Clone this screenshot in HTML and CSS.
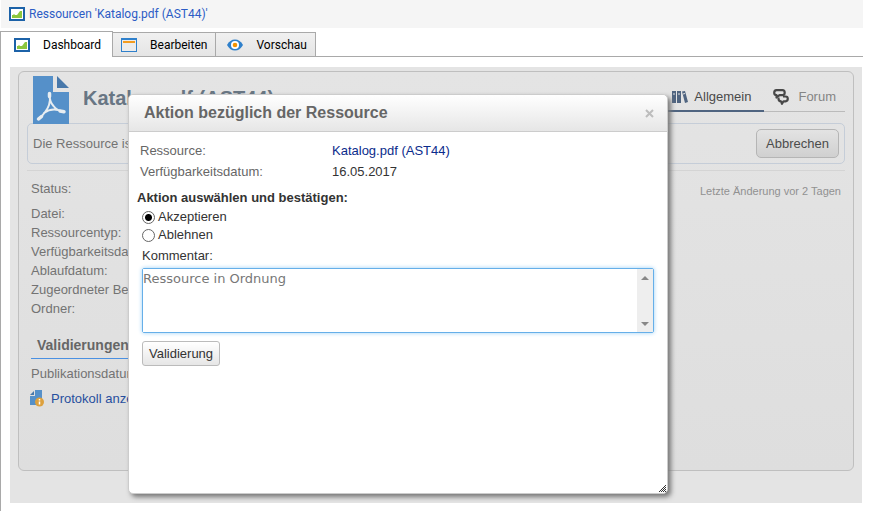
FILE: index.html
```html
<!DOCTYPE html>
<html lang="de">
<head>
<meta charset="utf-8">
<title>Ressourcen 'Katalog.pdf (AST44)'</title>
<link rel="stylesheet" href="styles.css">
</head>
<body>
<svg class="defs" aria-hidden="true">
  <symbol id="chart" viewBox="0 0 16 14">
    <rect x="1" y="1" width="14" height="12" fill="#fff" stroke="#1c62a8" stroke-width="2"/>
    <path d="M3 11V8h1l1-1 1 1h2l3-4h2v7z" fill="#8cc63e"/>
  </symbol>
</svg>
<div class="page">
  <nav class="crumbs"><svg class="ic-chart"><use href="#chart"/></svg><a href="#">Ressourcen 'Katalog.pdf (AST44)'</a></nav>
  <div class="tabs" role="tablist">
    <button class="tab active" role="tab"><svg class="ic-chart"><use href="#chart"/></svg>Dashboard</button>
    <button class="tab" role="tab"><svg class="ic-chart" viewBox="0 0 16 14"><rect x=".5" y=".5" width="15" height="13" fill="#ececec" stroke="#2f80cb"/><path d="M0 1h16" stroke="#2f80cb" stroke-width="2"/><path d="M2 4h12" stroke="#f39c1f" stroke-width="2"/></svg>Bearbeiten</button>
    <button class="tab" role="tab"><svg class="ic-chart" viewBox="0 0 16 14"><path d="M0 7Q3 1.500 8 1.500T16 7Q13 12.500 8 12.500T0 7z" fill="#2f80cb"/><circle cx="8" cy="7" r="4" fill="#fff"/><circle cx="8" cy="7" r="2.300" fill="#f39200"/></svg>Vorschau</button>
  </div>
  <main class="panel">
    <div class="stage">
      <section class="card">
        <header class="head">
          <svg class="ic-pdf" viewBox="0 0 36 48"><path d="M0 0h20v16h16v32H0z" fill="#5590c9"/><path d="M24 0v12h12z" fill="#4878aa"/><g fill="none" stroke="#e8edf1" stroke-linecap="round" stroke-linejoin="round"><path d="M16.500 18c1 5 .5 8-.5 11-2 6-6 10-10 14M16.500 18c0 6 1 9 4 12 3 4 6 5 10 5.500M11 37c4-3 9-4 14-3" stroke-width="2"/><path d="M16.500 17.500v3M5.500 43l3-2.500M27 35l4 .7" stroke-width="3.500"/></g></svg>
          <h1>Katalog.pdf (AST44)</h1>
          <div class="views">
            <a class="view current" href="#"><svg class="ic-books" viewBox="0 0 16 12"><path d="M0 0h4v12H0zM5 0h4v12H5zM10 .5l3-.5 3 11-3 1z" fill="#4f6480"/><path d="M1 3h2M6 3h2M11 3l2-.5" stroke="#e3e3e3"/></svg>Allgemein</a>
            <a class="view" href="#"><svg class="ic-forum" viewBox="0 0 16 16"><g fill="none" stroke="#484848" stroke-width="2.200" stroke-linejoin="round"><path d="M3.500 1.200h6q2.200 0 2.200 2.500T9.500 6.200H6.500L3.500 8.500V6.200Q1.200 6 1.200 3.700T3.500 1.200z"/><path d="M10 7.500h2.500q2.300 0 2.300 2.300T12.500 12.300H10.500L9 14.800 8 12.300q-2.500 0-2.500-2.500V8.500"/></g></svg>Forum</a>
          </div>
        </header>
        <div class="notice"><span>Die Ressource ist zu validieren</span><button class="btn cancel">Abbrechen</button></div>
        <div class="details">
          <dl><dt class="status">Status:</dt><dt>Datei:</dt><dt>Ressourcentyp:</dt><dt>Verfügbarkeitsdatum:</dt><dt>Ablaufdatum:</dt><dt>Zugeordneter Benutzer:</dt><dt>Ordner:</dt></dl>
          <small>Letzte Änderung vor 2 Tagen</small>
        </div>
        <h2>Validierungen</h2>
        <p class="pub">Publikationsdatum:</p>
        <a class="log" href="#"><svg class="ic-log" viewBox="0 0 14 17"><path d="M5 0h7v15H0V6h5z" fill="#5590c9"/><path d="M0 5l4-4v4z" fill="#4878aa"/><circle cx="9.500" cy="12" r="4.500" fill="#dda13e"/><path d="M9.500 9v1.500M9.500 11.500v3" stroke="#fff" stroke-width="1.500"/></svg>Protokoll anzeigen</a>
      </section>
      <div class="dialog" role="dialog" aria-labelledby="dlg">
        <header class="bar"><h3 id="dlg">Aktion bezüglich der Ressource</h3><button class="close" aria-label="Schließen"><svg viewBox="0 0 9 9"><path d="M1 1l7 7M8 1L1 8" stroke="#bdbdbd" stroke-width="2"/></svg></button></header>
        <form class="body">
          <div class="facts"><span>Ressource:</span><a href="#">Katalog.pdf (AST44)</a><span>Verfügbarkeitsdatum:</span><b>16.05.2017</b></div>
          <fieldset>
            <legend>Aktion auswählen und bestätigen:</legend>
            <label class="choice"><input type="radio" name="action" checked>Akzeptieren</label>
            <label class="choice"><input type="radio" name="action">Ablehnen</label>
          </fieldset>
          <label class="caption" for="comment">Kommentar:</label>
          <div class="field"><textarea id="comment">Ressource in Ordnung</textarea>
            <svg class="rail" viewBox="0 0 16 63"><path d="M4 11l4-4 4 4zM4 53l4 4 4-4z" fill="#888"/></svg></div>
          <button class="btn" type="button">Validierung</button>
        </form>
        <svg class="grip" viewBox="0 0 8 8"><path d="M0 7h1v1H0zM2 7h1v1H2zM4 7h1v1H4zM6 7h1v1H6zM1 6h1v1H1zM3 6h1v1H3zM5 6h1v1H5zM2 5h1v1H2zM4 5h1v1H4zM6 5h1v1H6zM3 4h1v1H3zM5 4h1v1H5zM4 3h1v1H4zM6 3h1v1H6zM5 2h1v1H5zM6 1h1v1H6z" fill="#333"/></svg>
      </div>
    </div>
  </main>
</div>
</body>
</html>
```

FILE: styles.css
```css
* { box-sizing: border-box; }
body { margin: 0; background: #fff; color: #333; font: 13px/19px "Liberation Sans", Arial, sans-serif; }
h1, h2, h3, p, dl, fieldset { margin: 0; padding: 0; border: 0; }
button, textarea { font: inherit; }
a { text-decoration: none; }
svg { display: block; flex: none; }
.defs { position: absolute; width: 0; height: 0; }
.page { margin-right: 33px; display: flex; flex-direction: column; min-height: 100vh; }
.crumbs { display: flex; align-items: center; gap: 4px; height: 28px; margin-left: 1px; padding-left: 8px; background: #f5f5f5; font: 12px/16px Roboto, sans-serif; }
.crumbs a { color: #2c5cc5; }
.ic-chart { width: 16px; height: 14px; }
.tabs { display: flex; align-items: flex-end; height: 26px; margin-top: 3px; border-bottom: 1px solid #a9a9a9; }
.tab { display: flex; align-items: center; gap: 13px; height: 24px; margin-left: -1px; padding: 0 8px; border: 1px solid #a9a9a9; border-bottom: 0; background: linear-gradient(#f0f0f0, #e5e5e5); color: #000; font: 12px/16px Roboto, sans-serif; }
.tab + .tab + .tab { padding: 0 8px 0 11px; }
.tab.active { height: 26px; margin: 0 0 -1px; padding: 0 11px 0 13px; background: #fff; }
.panel { flex: 1; border-left: 1px solid #a9a9a9; padding: 10px 1px 8px 9px; }
.stage { position: relative; background: #e4e4e4; padding: 4px 8px 32px; }
.card { min-height: 400px; padding: 4px 8px 0; border: 1px solid #bfbfbf; border-radius: 6px; background: linear-gradient(#e4e4e4, #dedede); color: #737373; }
.head { display: flex; align-items: flex-start; height: 47px; padding-left: 6px; }
.ic-pdf { width: 36px; height: 48px; }
h1 { flex: 1; margin: 10px 0 0 14px; color: #687684; font-size: 20px; line-height: 24px; }
.views { display: flex; margin-top: 3px; }
.view { display: flex; align-items: center; gap: 9px; height: 33px; padding: 4px 9px 0; border-bottom: 1px solid #bbb; color: #858585; line-height: 20px; }
.view.current { gap: 6px; padding: 5px 13px 0; border-bottom: 2px solid #4f6480; color: #4a4a4a; }
.ic-books { width: 16px; height: 12px; }
.ic-forum { width: 16px; height: 16px; }
.notice { display: flex; align-items: center; justify-content: space-between; height: 41px; padding: 0 5px; border: 1px solid #c5cdd8; border-radius: 5px; }
.btn { height: 25px; padding: 0 6px; border: 1px solid #bbb; border-radius: 3px; background: linear-gradient(#fff, #e6e6e6); color: #333; }
.cancel { height: 29px; padding: 0 9px; border-color: #b5b5b5; border-radius: 5px; background: linear-gradient(#e3e3e3, #d0d0d0); color: #4c4c4c; }
.details { display: flex; justify-content: space-between; margin-top: 6px; padding: 8px 4px 0; border-top: 1px solid #d4d4d4; }
.status { margin-bottom: 6px; }
small { margin-top: 3px; color: #919191; font-size: 11px; }
h2 { width: 50%; margin: 17px 4px 5px; padding: 0 6px 3px; border-bottom: 1px solid #4a90e2; color: #666; font-size: 14px; line-height: 20px; }
.pub { padding-left: 4px; }
.log { display: flex; align-items: center; gap: 7px; margin: 6px 3px; color: #284f9e; }
.ic-log { width: 14px; height: 17px; }
.dialog { position: absolute; left: 118px; top: 27px; width: 540px; max-width: 100%; height: 400px; border: 1px solid #ccc; border-radius: 5px; background: #fff; box-shadow: 3px 3px 5px #777; }
.bar { display: flex; align-items: center; justify-content: space-between; height: 37px; padding: 0 13px 0 15px; border-bottom: 1px solid #ccc; border-radius: 5px 5px 0 0; background: linear-gradient(#fff, #e6e6e6); }
h3 { color: #666; font-size: 16px; line-height: 20px; }
.close { padding: 0; border: 0; background: none; }
.close svg { width: 9px; height: 9px; }
.body { padding: 8px 13px; }
.facts { display: grid; grid-template-columns: 192px 1fr; margin: 0 0 6px -2px; color: #666; line-height: 21px; }
.facts a { color: #0b2c8c; }
.facts b { color: #333; font-weight: normal; }
legend { padding: 0; margin: 0 0 1px -5px; font-weight: bold; line-height: 19px; }
.choice { display: flex; align-items: center; gap: 3px; line-height: 18px; }
.choice input { appearance: none; width: 13px; height: 13px; margin: 0; border: 1px solid #666; border-radius: 50%; background: #fff; }
.choice input:checked { background: radial-gradient(circle, #000 3px, #fff 4px); }
.caption { display: block; margin: 2px 0; line-height: 20px; }
.field { display: flex; height: 65px; margin-bottom: 8px; border: 1px solid #66afe9; border-radius: 2px; box-shadow: 0 0 4px #9bd0f5; }
textarea { flex: 1; padding: 0; border: 0; outline: 0; resize: none; background: #fff; color: #777; font: 13px/19px "DejaVu Sans", sans-serif; }
.rail { width: 16px; height: 63px; background: #eee; }
.grip { position: absolute; right: 0; bottom: 1px; width: 8px; height: 8px; }
```
